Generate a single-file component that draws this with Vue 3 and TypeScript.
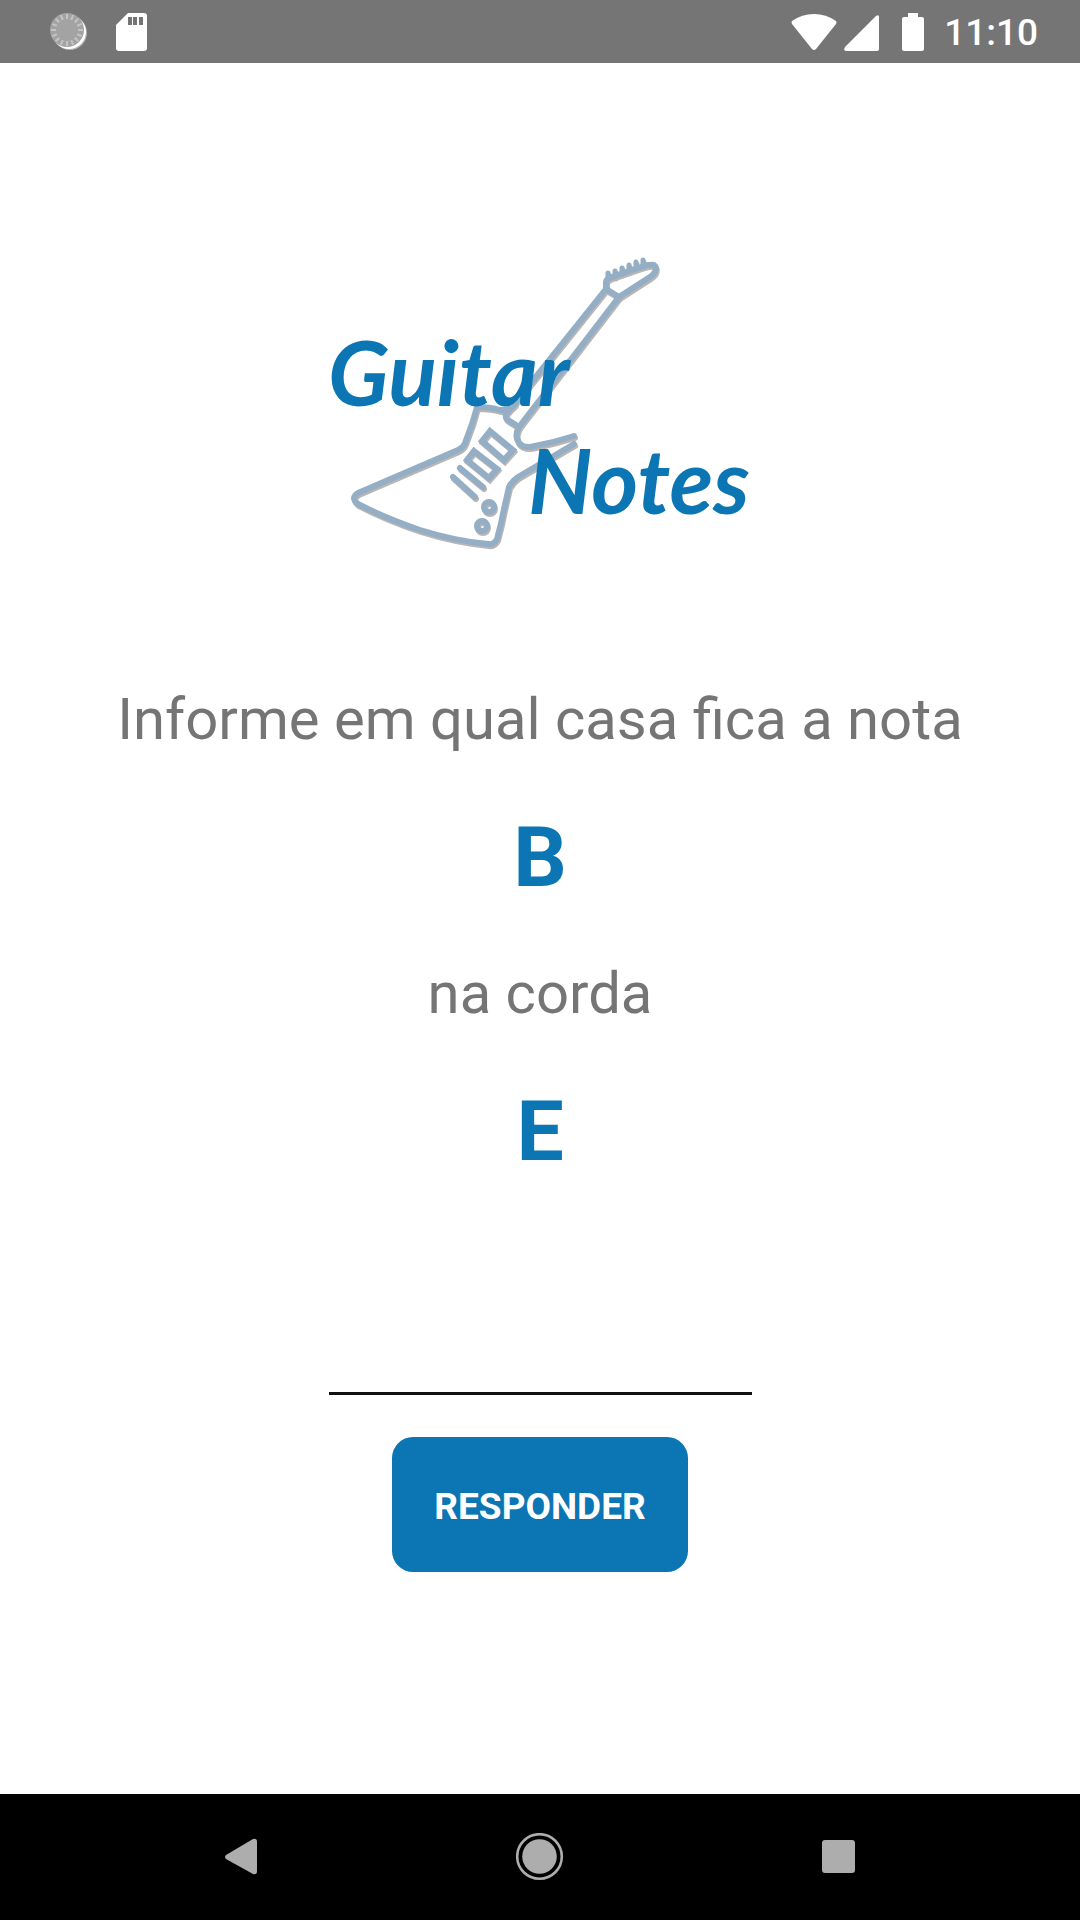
<script setup lang="ts">
import { ref } from 'vue'

const note = ref<string>('B')
const chord = ref<string>('E')
const answer = ref<string>('')
const ticks: number[] = Array.from({ length: 16 }, (_, i) => i * 22.5)
const pegs: [number, number][] = [
  [608, 273], [615, 271], [622, 268], [629, 265], [636, 262], [643, 260],
]
</script>

<template>
  <div class="screen">
    <header class="status">
      <div class="group left">
        <svg class="spinner" width="38" height="38" viewBox="0 0 38 38" aria-hidden="true">
          <circle cx="20" cy="20" r="17" fill="#b5b5b5" />
          <circle cx="19" cy="19" r="17" fill="#fff" />
          <circle cx="17" cy="17" r="17" fill="#a3a3a3" />
          <line
            v-for="t in ticks" :key="t" x1="17" y1="1" x2="17" y2="6"
            stroke="#c4c4c4" stroke-width="2" :transform="`rotate(${t} 17 17)`"
          />
        </svg>
        <svg width="31" height="38" viewBox="0 0 31 38" aria-hidden="true">
          <path d="M12 0H28Q31 0 31 3V35Q31 38 28 38H3Q0 38 0 35V12Z" fill="#fff" />
          <path d="M12 4h4v8h-4zM17 4h4v8h-4zM23 4h4v8h-4z" fill="#757575" />
        </svg>
      </div>
      <div class="group right">
        <svg width="46" height="38" viewBox="0 0 46 38" aria-hidden="true">
          <path d="M1 8Q11 1 23 1T45 8Q46 9 45 11L25 36Q23 38 21 36L1 11Q0 9 1 8Z" fill="#fff" />
        </svg>
        <svg class="signal" width="35" height="38" viewBox="0 0 35 38" aria-hidden="true">
          <path d="M32 3Q35 1 35 4V36Q35 38 33 38H2Q-1 38 1 34Z" fill="#fff" />
        </svg>
        <svg class="battery" width="22" height="38" viewBox="0 0 22 38" aria-hidden="true">
          <path d="M6 0H16V4H20Q22 4 22 6V36Q22 38 20 38H2Q0 38 0 36V6Q0 4 2 4H6Z" fill="#fff" />
        </svg>
        <time class="clock">11:10</time>
      </div>
    </header>

    <main class="content">
      <svg class="logo" viewBox="328 245 424 320" role="img" aria-label="Guitar Notes">
        <defs>
          <g id="guitar" fill="none" stroke-width="6" stroke-linejoin="round" stroke-linecap="round">
            <path d="M606 289V282Q607 278 612 277L641 267Q649 264 654 265Q657 267 655 272Q653 275 650 277L619 297Z" />
            <path v-for="p in pegs" :key="p[0]" :d="`M${p[0]} ${p[1]}v6`" stroke-width="5" />
            <path d="M606 289L506 414Q505 418 508 420L519 427" />
            <path d="M619 297L519 427Q514 436 519 443Q524 449 535 446Q555 442 574 436" />
            <path d="M515 404Q510 411 500 410Q490 407 477 407L472 424L465 443Q463 448 458 450L358 493Q350 498 358 504Q385 518 420 530Q455 541 488 544Q494 545 497 539Q501 525 504 509L509 487Q512 481 518 477L574 444" />
            <path stroke-linejoin="miter" d="M490 431L513 450L504 460L482 441ZM474 451L497 469L489 478L467 460ZM460 468L483 487M453 477L475 497" />
            <circle cx="489" cy="507" r="5" />
            <circle cx="482" cy="526" r="5" />
          </g>
        </defs>
        <use href="#guitar" x="1" y="2" stroke="#b9b6b4" />
        <use href="#guitar" stroke="#94aec6" />
        <text class="word" x="328" y="406">Guitar</text>
        <text class="word" x="528" y="514">Notes</text>
      </svg>

      <p class="prompt">Informe em qual casa fica a nota</p>
      <strong class="key">{{ note }}</strong>
      <p class="prompt">na corda</p>
      <strong class="key">{{ chord }}</strong>

      <form class="form" @submit.prevent>
        <input v-model="answer" class="answer" type="text" inputmode="numeric" aria-label="Casa">
        <button class="submit" type="submit">RESPONDER</button>
      </form>
    </main>

    <nav class="navbar" aria-label="Sistema">
      <button type="button" aria-label="Voltar">
        <svg width="48" height="48" viewBox="0 0 48 48">
          <path d="M8 22L35 6Q39 5 39 9V38Q39 42 35 41L8 26Q6 24 8 22Z" fill="#adadad" />
        </svg>
      </button>
      <button type="button" aria-label="Início">
        <svg width="48" height="48" viewBox="0 0 48 48">
          <circle cx="23.5" cy="23.5" r="22.3" fill="none" stroke="#adadad" stroke-width="2.6" />
          <circle cx="23.5" cy="23.5" r="17.3" fill="#adadad" />
        </svg>
      </button>
      <button type="button" aria-label="Recentes">
        <svg width="48" height="48" viewBox="0 0 48 48">
          <rect x="8" y="7" width="33" height="33" rx="3" fill="#adadad" />
        </svg>
      </button>
    </nav>
  </div>
</template>

<style scoped>
.screen {
  display: flex;
  flex-direction: column;
  min-height: 100vh;
  background: #fff;
  font-family: Roboto, "Liberation Sans", sans-serif;
}

svg {
  display: block;
}

.status {
  display: flex;
  justify-content: space-between;
  align-items: center;
  height: 63px;
  padding: 0 42px 0 50px;
  background: #757575;
  color: #fff;
}

.group {
  display: flex;
  align-items: center;
}

.left {
  gap: 28px;
}

.signal {
  margin-left: 7px;
}

.battery {
  margin: 0 20px 0 23px;
}

.clock {
  padding-top: 2px;
  font-size: 37px;
  line-height: 44px;
  font-weight: 500;
}

.content {
  flex: 1;
  display: flex;
  flex-direction: column;
  align-items: center;
  padding: 182px 24px 48px;
}

.logo {
  width: 424px;
  max-width: 100%;
  margin-bottom: 120px;
}

.word {
  font-family: Lato, "Liberation Sans", sans-serif;
  font-size: 90px;
  font-style: italic;
  font-weight: 700;
  fill: #0b76b3;
}

.prompt {
  margin: 0;
  font-size: 58px;
  line-height: 68px;
  color: #757575;
  text-align: center;
}

.key {
  margin: 56px 0 52px;
  font-size: 84px;
  line-height: 98px;
  font-weight: 700;
  color: #0b76b3;
}

.form {
  display: flex;
  flex-direction: column;
  align-items: center;
  gap: 42px;
  margin-top: 44px;
}

.answer {
  box-sizing: border-box;
  width: 423px;
  max-width: 100%;
  height: 118px;
  padding: 0;
  border: 0;
  border-bottom: 3px solid #111;
  border-radius: 0;
  outline: 0;
  background: transparent;
  font: inherit;
  font-size: 58px;
  text-align: center;
}

.submit {
  padding: 48px 42px 44px;
  border: 0;
  border-radius: 21px;
  background: #0b76b3;
  color: #fff;
  font-family: inherit;
  font-size: 37px;
  line-height: 43px;
  font-weight: 700;
}

.navbar {
  display: flex;
  justify-content: center;
  align-items: center;
  gap: 250px;
  height: 126px;
  background: #000;
}

.navbar button {
  padding: 0;
  border: 0;
  background: none;
}
</style>

<style>
body {
  margin: 0;
}
</style>
